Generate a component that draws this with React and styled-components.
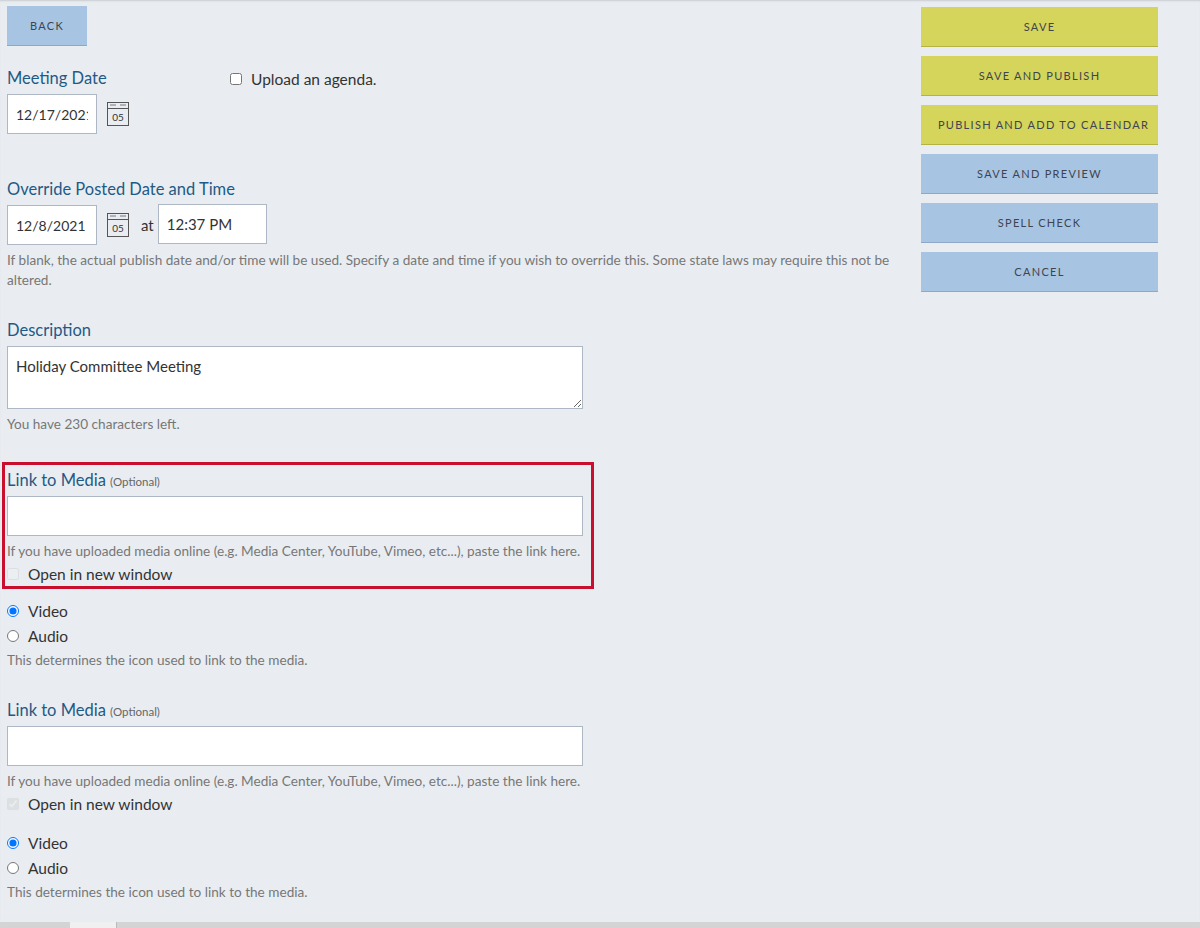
import React from 'react'
import styled, { createGlobalStyle } from 'styled-components'

const Global = createGlobalStyle`
  html, body { margin: 0; padding: 0; background: #e9edf1; }
  body { font-family: Lato, "Open Sans", sans-serif; color: #333; overflow: hidden; }
`

const Page = styled.div`
  height: 928px;
  display: flex;
  flex-direction: column;
  box-shadow: inset 0 2px 2px -1px #c9ccd0;
`

const Main = styled.div`
  flex: 1;
  display: flex;
  padding: 6px 0 0 7px;
`

const Left = styled.div`
  width: 890px;
  display: flex;
  flex-direction: column;
`

const Right = styled.div`
  margin-left: 24px;
  width: 237px;
  display: flex;
  flex-direction: column;
  gap: 9px;
  padding-top: 1px;
`

const Button = styled.button`
  height: 40px;
  width: ${p => p.$w || '100%'};
  border: none;
  border-bottom: 1px solid ${p => (p.$yellow ? '#b3b443' : '#8ea8c6')};
  background: ${p => (p.$yellow ? '#d4d55a' : '#a7c5e3')};
  color: #3f4450;
  font-family: Lato, sans-serif;
  font-size: 11px;
  letter-spacing: 1.3px;
  text-transform: uppercase;
  padding: 0;
  white-space: nowrap;
  text-indent: ${p => p.$indent || '0'};
`

const Label = styled.div`
  color: #1e5a86;
  font-size: 16.5px;
  margin-bottom: 6px;
  small { color: #666; font-size: 11.5px; }
`

const Row = styled.div`
  display: flex;
  align-items: center;
  gap: ${p => p.$gap || '10px'};
`

const Input = styled.input`
  box-sizing: border-box;
  height: 40px;
  width: ${p => p.$w};
  border: 1px solid #aeb8c4;
  background: #fff;
  padding: 0 8px;
  font-family: Lato, sans-serif;
  font-size: ${p => p.$fs || '14px'};
  color: #333;
`

const TextArea = styled.textarea`
  box-sizing: border-box;
  width: 576px;
  height: 63px;
  border: 1px solid #aeb8c4;
  padding: 10px 8px;
  font-family: Lato, sans-serif;
  font-size: 15px;
  color: #333;
  resize: vertical;
  display: block;
`

const Help = styled.div`
  font-size: 13.6px;
  color: #777;
  line-height: 20px;
  margin-top: ${p => p.$mt || '6px'};
`

const Check = styled.label`
  display: flex;
  align-items: center;
  gap: 5px;
  font-size: 15.5px;
  color: #333;
  height: 25px;
  input { margin: 0 4px 0 0; width: 12px; height: 12px; opacity: ${p => (p.$dim ? 0.4 : 1)}; }
`

const Highlight = styled.div`
  margin: 0 0 0 -5px;
  width: 592px;
  box-sizing: border-box;
  border: 3px solid #c8102e;
  padding: 5px 2px 0 2px;
  height: 127px;
`

const Section = styled.div`
  margin-top: ${p => p.$mt || '0'};
`

const Bottom = styled.div`
  height: 6px;
  background: #d4d4d4;
  display: flex;
  div { margin-left: 70px; width: 46px; background: #f0f0f0; border-right: 1px solid #bbb; }
`

const Cal = () => (
  <svg width="22" height="24" viewBox="0 0 22 24">
    <rect x="0.5" y="0.5" width="21" height="23" fill="none" stroke="#555" />
    <line x1="0.5" y1="6.5" x2="21.5" y2="6.5" stroke="#555" />
    <line x1="3" y1="3" x2="9" y2="3" stroke="#777" />
    <line x1="13" y1="3" x2="19" y2="3" stroke="#777" />
    <text x="11" y="19" textAnchor="middle" fontSize="10" fontFamily="Lato, sans-serif" fill="#333">05</text>
  </svg>
)

const MediaBlock = ({ checked }) => (
  <>
    <Label>Link to Media <small>(Optional)</small></Label>
    <Input $w="576px" />
    <Help $mt="5px">If you have uploaded media online (e.g. Media Center, YouTube, Vimeo, etc...), paste the link here.</Help>
    <Check $dim><input type="checkbox" disabled defaultChecked={checked} /> Open in new window</Check>
  </>
)

const MediaType = ({ name, mt }) => (
  <Section $mt={mt}>
    <Check><input type="radio" name={name} defaultChecked /> Video</Check>
    <Check><input type="radio" name={name} /> Audio</Check>
    <Help $mt="2px">This determines the icon used to link to the media.</Help>
  </Section>
)

export default function App() {
  return (
    <Page>
      <Global />
      <Main>
        <Left>
          <Button $w="80px">Back</Button>
          <Section $mt="22px">
            <Row $gap="0" style={{ alignItems: 'flex-start' }}>
              <div style={{ width: 223 }}>
                <Label>Meeting Date</Label>
                <Row><Input $w="90px" defaultValue="12/17/2021" /><Cal /></Row>
              </div>
              <Check style={{ height: 22 }}><input type="checkbox" /> Upload an agenda.</Check>
            </Row>
          </Section>
          <Section $mt="45px">
            <Label>Override Posted Date and Time</Label>
            <Row>
              <Input $w="90px" defaultValue="12/8/2021" />
              <Cal />
              <span style={{ fontSize: 15, marginLeft: 2 }}>at</span>
              <Input $w="109px" $fs="15px" defaultValue="12:37 PM" style={{ marginLeft: -6, marginTop: -2 }} />
            </Row>
            <Help $mt="5px">If blank, the actual publish date and/or time will be used. Specify a date and time if you wish to override this. Some state laws may require this not be altered.</Help>
          </Section>
          <Section $mt="30px">
            <Label>Description</Label>
            <TextArea defaultValue="Holiday Committee Meeting" />
            <Help $mt="5px">You have 230 characters left.</Help>
          </Section>
          <Section $mt="28px">
            <Highlight><MediaBlock /></Highlight>
          </Section>
          <MediaType name="t1" mt="9px" />
          <Section $mt="30px"><MediaBlock checked /></Section>
          <MediaType name="t2" mt="14px" />
        </Left>
        <Right>
          <Button $yellow>Save</Button>
          <Button $yellow>Save and Publish</Button>
          <Button $yellow $indent="8px">Publish and Add to Calendar</Button>
          <Button>Save and Preview</Button>
          <Button>Spell Check</Button>
          <Button>Cancel</Button>
        </Right>
      </Main>
      <Bottom><div /></Bottom>
    </Page>
  )
}
